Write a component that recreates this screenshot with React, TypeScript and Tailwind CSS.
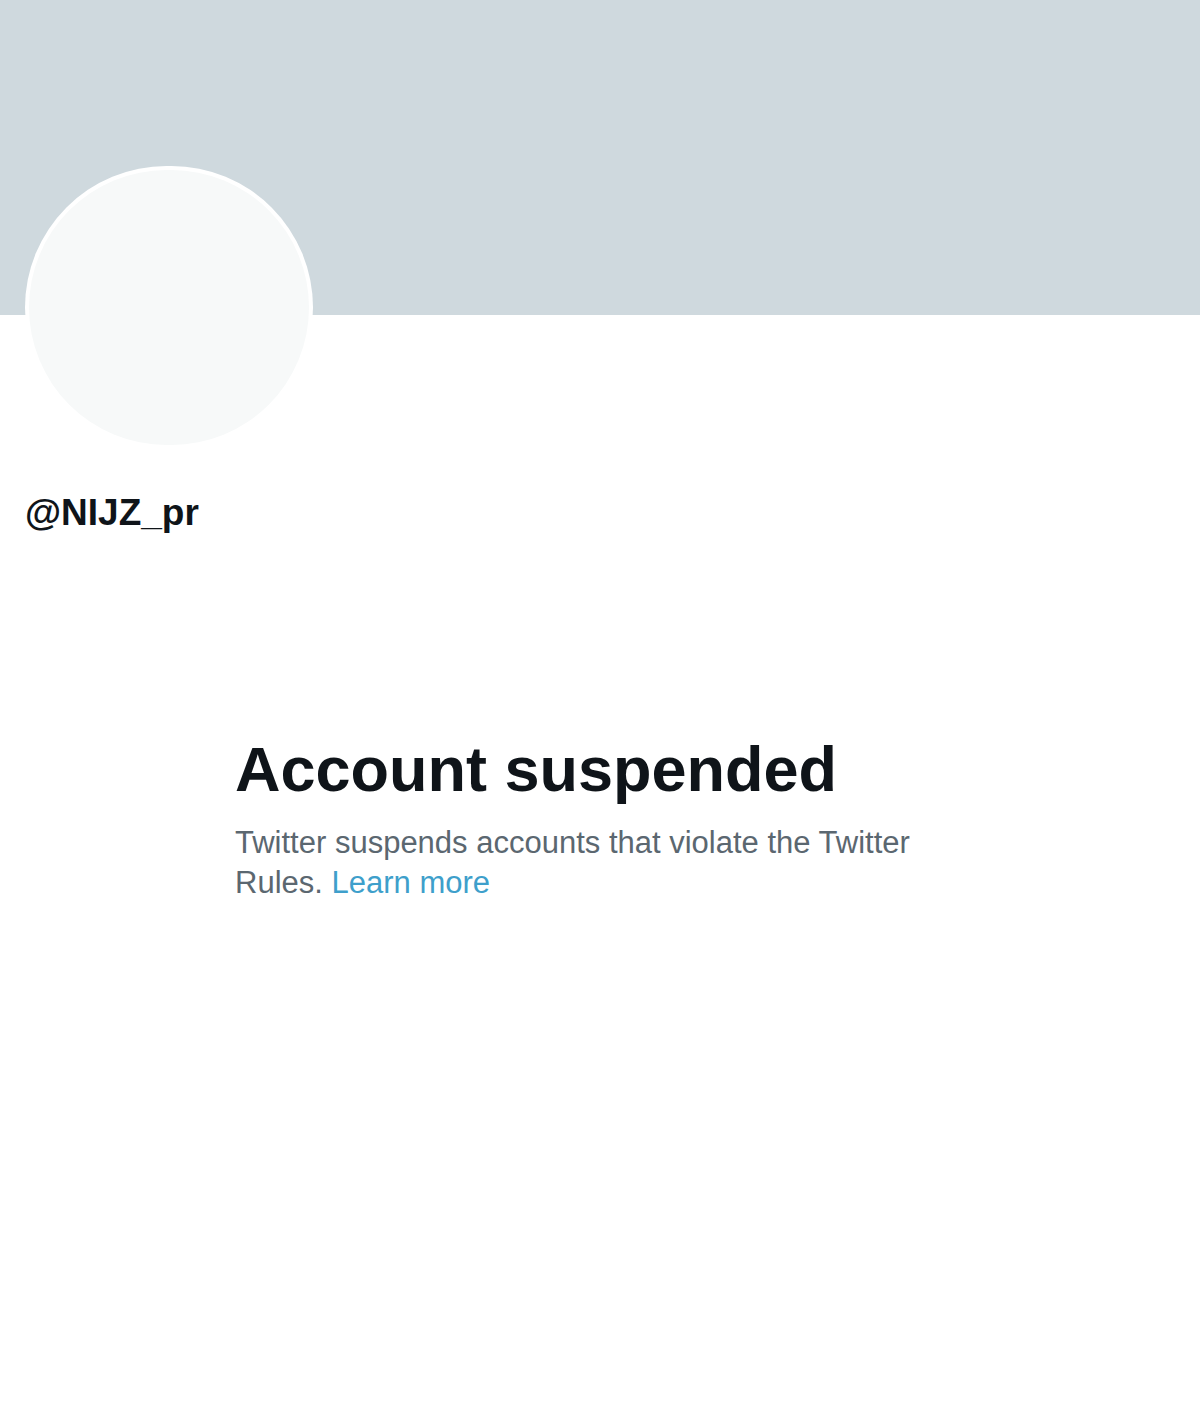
export default function App() {
  return (
    <div
      className="relative w-[1200px] h-[1416px] bg-white overflow-hidden"
      style={{ fontFamily: '"Liberation Sans", Arial, sans-serif' }}
    >
      <div className="h-[315px] bg-[#cfd9de]" />

      {/* avatar overlaps the banner */}
      <div className="absolute left-[25px] top-[166px] w-[288px] h-[283px] rounded-full bg-white p-[4px]">
        <div className="w-full h-full rounded-full bg-[#f7f9f9]" />
      </div>

      <div className="pl-[25px] pt-[176px]">
        <div className="text-[37px] leading-[44px] font-bold text-[#0f1419]">@NIJZ_pr</div>
      </div>

      <div className="pl-[235px] pt-[196px] w-[950px]">
        <h1 className="text-[63px] leading-[76px] font-bold text-[#0f1419]">Account suspended</h1>
        <p className="mt-[16px] w-[720px] text-[31px] leading-[40px] text-[#5b6770]">
          Twitter suspends accounts that violate the Twitter Rules.{" "}
          <span className="text-[#3e9fcb]">Learn more</span>
        </p>
      </div>
    </div>
  );
}
